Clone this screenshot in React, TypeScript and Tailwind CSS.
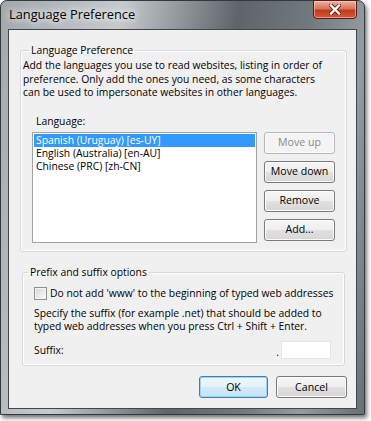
import React from 'react';

const ui = "font-['Segoe_UI','Open_Sans',sans-serif]";

function Btn({
  children,
  className = '',
  disabled = false,
  primary = false,
}: {
  children: React.ReactNode;
  className?: string;
  disabled?: boolean;
  primary?: boolean;
}) {
  let look =
    'border-[#7a7a7a] text-black bg-[linear-gradient(#f6f6f6_0%,#eeeeee_50%,#e1e1e1_50%,#d6d6d6_100%)] shadow-[inset_0_0_0_1px_#fbfbfb]';
  if (disabled) look = 'border-[#b4b8bb] text-[#8a8a8a] bg-[#f4f4f4] shadow-[inset_0_0_0_1px_#fbfbfb]';
  if (primary)
    look =
      'border-[#3c7fb1] text-black bg-[linear-gradient(#eef7fc_0%,#e3f2fb_50%,#d2ebf8_50%,#c4e4f5_100%)] shadow-[inset_0_0_0_1px_#9fd3f1]';
  return (
    <div
      className={`flex items-center justify-center rounded-[3px] border text-[10.6px] leading-none ${look} ${className}`}
    >
      {children}
    </div>
  );
}

const langs = ['Spanish (Uruguay) [es-UY]', 'English (Australia) [en-AU]', 'Chinese (PRC) [zh-CN]'];

export default function App() {
  return (
    <div className={`w-[371px] h-[421px] bg-white overflow-hidden ${ui}`}>
      {/* Window frame */}
      <div className="relative w-[365px] h-[415px] rounded-t-[7px] border border-[#33383c] bg-[linear-gradient(100deg,#a3a8ad_0%,#c6cacd_28%,#979ca1_40%,#5e6469_55%,#737a7f_72%,#959ca1_85%,#687076_100%)] shadow-[2px_3px_4px_rgba(0,0,0,0.55)] flex flex-col">
        {/* Title bar */}
        <div className="h-[28px] flex items-center pl-[8px]">
          <span className="text-[12.8px] text-black whitespace-nowrap [text-shadow:0_0_6px_#ffffff,0_0_10px_#ffffff]">
            Language Preference
          </span>
        </div>
        {/* Close button */}
        <div className="absolute right-[7px] top-[-1px] w-[44px] h-[19px] rounded-b-[4px] border border-[#5a1d12] bg-[linear-gradient(#eab3a4_0%,#d8745c_45%,#c23b1d_55%,#d35a36_100%)] shadow-[inset_0_0_0_1px_rgba(255,220,210,0.5)] flex items-center justify-center">
          <svg width="12" height="11" viewBox="0 0 12 11">
            <path d="M2 1.5 L10 9.5 M10 1.5 L2 9.5" stroke="#5b1a10" strokeWidth="4" strokeLinecap="square" />
            <path d="M2 1.5 L10 9.5 M10 1.5 L2 9.5" stroke="#ffffff" strokeWidth="2.4" strokeLinecap="square" />
          </svg>
        </div>

        {/* Client area */}
        <div className="mx-[7px] h-[380px] border border-[#3f464c] bg-[#f0f0f0] flex flex-col px-[11px] pt-[13px] text-[10.35px] text-black whitespace-nowrap">
          {/* Group 1 */}
          <fieldset className="h-[209px] border border-[#d5d9dc] rounded-[3px] pl-[2px] pr-[11px] shadow-[inset_0_0_0_1px_#ffffff]">
            <legend className="ml-[6px] px-[2px] leading-[14px]">Language Preference</legend>
            <p className="mt-[2px] leading-[13.5px]">
              Add the languages you use to read websites, listing in order of
              <br />
              preference. Only add the ones you need, as some characters
              <br />
              can be used to impersonate websites in other languages.
            </p>
            <div className="mt-[15px] ml-[13px] leading-[13px]">Language:</div>
            <div className="mt-[4px] ml-[9px] flex gap-[7px]">
              <div className="w-[225px] h-[111px] border border-[#9ea3a8] bg-white p-[1px]">
                {langs.map((l, i) => (
                  <div
                    key={l}
                    className={`h-[13px] leading-[13px] pl-[2px] ${i === 0 ? 'bg-[#3399ff] text-white' : ''}`}
                  >
                    {l}
                  </div>
                ))}
              </div>
              <div className="flex flex-col gap-[7px]">
                <Btn disabled className="w-[71px] h-[22px]">
                  Move up
                </Btn>
                <Btn className="w-[71px] h-[22px]">Move down</Btn>
                <Btn className="w-[71px] h-[22px]">Remove</Btn>
                <Btn className="w-[71px] h-[22px]">Add...</Btn>
              </div>
            </div>
          </fieldset>

          {/* Group 2 */}
          <fieldset className="mt-[13px] ml-[2px] h-[101px] border border-[#d5d9dc] rounded-[3px] pl-[2px] shadow-[inset_0_0_0_1px_#ffffff]">
            <legend className="ml-[3px] px-[2px] leading-[14px]">Prefix and suffix options</legend>
            <div className="ml-[9px] mt-[8px] flex items-center gap-[3px]">
              <div className="w-[13px] h-[13px] border border-[#8e8f8f] bg-[linear-gradient(135deg,#d6d6d6,#fbfbfb)] shadow-[inset_0_0_0_1px_#f4f4f4]" />
              <span className="leading-[13px]">Do not add 'www' to the beginning of typed web addresses</span>
            </div>
            <p className="ml-[9px] mt-[7px] leading-[13px]">
              Specify the suffix (for example .net) that should be added to
              <br />
              typed web addresses when you press Ctrl + Shift + Enter.
            </p>
            <div className="ml-[9px] mt-[8px] flex items-center">
              <span className="leading-[13px]">Suffix:</span>
              <span className="ml-auto mr-[2px] self-end leading-[13px]">.</span>
              <div className="w-[50px] h-[18px] bg-white border border-[#e2e6ea] mr-[13px]" />
            </div>
          </fieldset>

          {/* Bottom buttons */}
          <div className="mt-[10px] flex justify-end gap-[8px] mr-[-2px]">
            <Btn primary className="w-[69px] h-[22px]">
              OK
            </Btn>
            <Btn className="w-[71px] h-[22px]">Cancel</Btn>
          </div>
        </div>
      </div>
    </div>
  );
}
